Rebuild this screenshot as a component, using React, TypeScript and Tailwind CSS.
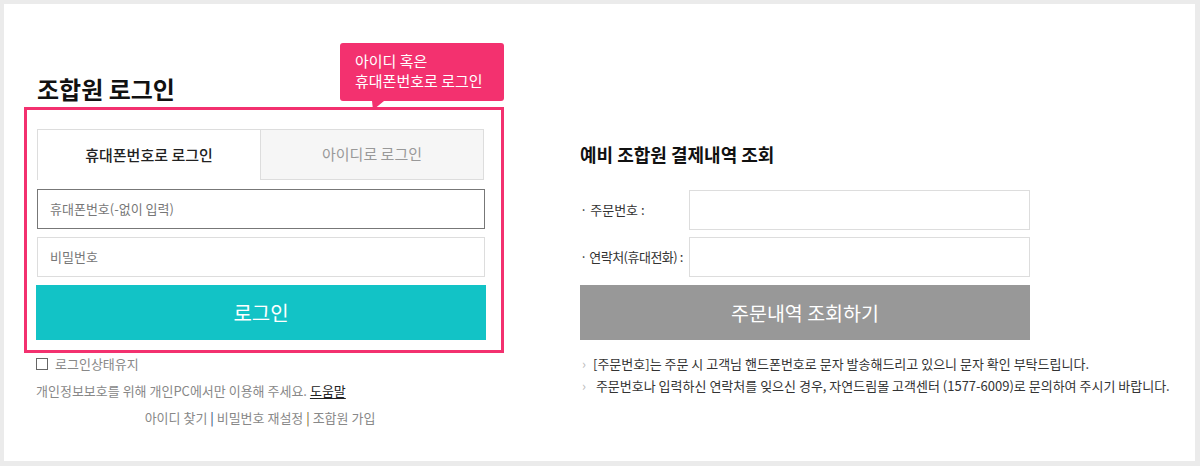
import React from 'react';

const font = { fontFamily: '"Noto Sans CJK KR", "Noto Sans", sans-serif' };

function Tooltip() {
  return (
    <div className="absolute left-[313px] top-[-67px] w-[164px] h-[58px] bg-[#f3316f] rounded-[3px] text-white text-[15px] leading-[20px] pt-[8px] pl-[15px] whitespace-nowrap">
      <div>아이디 혹은</div>
      <div>휴대폰번호로 로그인</div>
      <svg className="absolute left-[32px] bottom-[-9px]" width="12" height="9" viewBox="0 0 12 9">
        <polygon points="0,0 12,0 1,9" fill="#f3316f" />
      </svg>
    </div>
  );
}

function LoginBox() {
  return (
    <div className="relative w-[480px] border-[3px] border-[#f3316f] pt-[19px] pb-[10px] pl-[9px] pr-[15px]">
      <Tooltip />
      <div className="ml-[1px] w-[447px] h-[51px] flex">
        <div className="flex-1 border-l border-t border-[#dddddd] bg-white flex items-center justify-center text-[15px] font-medium text-[#222]">
          휴대폰번호로 로그인
        </div>
        <div className="flex-1 border border-[#dddddd] bg-[#f6f6f6] flex items-center justify-center text-[15px] text-[#999]">
          아이디로 로그인
        </div>
      </div>
      <div className="ml-[1px] w-[448px] h-[40px] mt-[9px] border border-[#777] flex items-center pl-[12px] text-[13px] text-[#777]">
        휴대폰번호(-없이 입력)
      </div>
      <div className="ml-[1px] w-[448px] h-[40px] mt-[8px] border border-[#dddddd] flex items-center pl-[12px] text-[13px] text-[#777]">
        비밀번호
      </div>
      <div className="w-[450px] h-[55px] mt-[8px] bg-[#12c3c6] flex items-center justify-center text-white text-[20px]">
        로그인
      </div>
    </div>
  );
}

export default function App() {
  return (
    <div className="w-[1200px] h-[466px] bg-[#ebebeb] pt-[4px] pl-[4px] pr-[5px] pb-[5px]" style={font}>
      <div className="w-full h-full bg-white flex">
        <div className="ml-[20px] w-[480px] flex flex-col">
          <h2 className="mt-[71px] mb-[4px] ml-[13px] text-[24px] leading-[28px] font-bold text-[#111]">조합원 로그인</h2>
          <LoginBox />
          <div className="mt-[2px] ml-[12px] flex items-center gap-[7px] text-[13px] leading-[18px] text-[#888]">
            <span className="w-[12px] h-[12px] border border-[#666] bg-white" />
            <span>로그인상태유지</span>
          </div>
          <div className="mt-[9px] ml-[12px] text-[13px] leading-[18px] text-[#888]">
            개인정보보호를 위해 개인PC에서만 이용해 주세요.{' '}
            <span className="text-[#222] underline underline-offset-2">도움말</span>
          </div>
          <div className="mt-[9px] mr-[8px] text-center text-[13px] leading-[18px] text-[#888]">
            아이디 찾기 <span className="text-[#1e3a6e]">|</span> 비밀번호 재설정{' '}
            <span className="text-[#7a5a20]">|</span> 조합원 가입
          </div>
        </div>
        <div className="ml-[76px] w-[450px] flex flex-col">
          <h2 className="mt-[138px] text-[18px] leading-[24px] font-bold text-[#111]">예비 조합원 결제내역 조회</h2>
          <div className="mt-[24px] flex items-center h-[40px]">
            <span className="w-[109px] text-[13px] text-[#333]">· 주문번호 :</span>
            <div className="flex-1 h-[40px] border border-[#dddddd]" />
          </div>
          <div className="mt-[7px] flex items-center h-[40px]">
            <span className="w-[109px] text-[13px] text-[#333] tracking-[-0.5px] whitespace-nowrap">· 연락처(휴대전화) :</span>
            <div className="flex-1 h-[40px] border border-[#dddddd]" />
          </div>
          <div className="mt-[8px] h-[55px] bg-[#989898] flex items-center justify-center text-white text-[19.5px]">
            주문내역 조회하기
          </div>
          <div className="mt-[13px] text-[13px] leading-[22px] text-[#333] w-[620px] whitespace-nowrap">
            <div className="flex">
              <span className="w-[13px] text-[#bbb] pl-[2px]">›</span>
              <span>[주문번호]는 주문 시 고객님 핸드폰번호로 문자 발송해드리고 있으니 문자 확인 부탁드립니다.</span>
            </div>
            <div className="flex">
              <span className="w-[13px] text-[#bbb] pl-[2px]">›</span>
              <span>&nbsp;주문번호나 입력하신 연락처를 잊으신 경우, 자연드림몰 고객센터 (1577-6009)로 문의하여 주시기 바랍니다.</span>
            </div>
          </div>
        </div>
      </div>
    </div>
  );
}
